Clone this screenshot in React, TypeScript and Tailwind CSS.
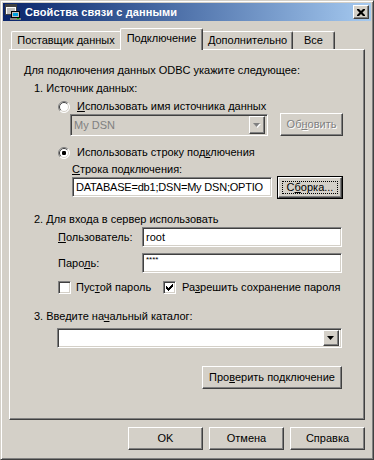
import React from 'react';

const raised = 'border border-t-white border-l-white border-r-[#404040] border-b-[#404040] shadow-[inset_-1px_-1px_#808080] bg-[#d4d0c8]';
const sunken = 'border border-t-[#808080] border-l-[#808080] border-r-white border-b-white shadow-[inset_1px_1px_#404040,inset_-1px_-1px_#d4d0c8]';
const disabledText = 'text-[#808080] [text-shadow:1px_1px_#ffffff]';

const Radio = ({ checked }: { checked?: boolean }) => (
    <svg width="12" height="12" viewBox="0 0 12 12" className="shrink-0">
        <circle cx="6" cy="6" r="5.5" fill="#ffffff" />
        <path d="M2.1 9.9 A5.5 5.5 0 0 1 9.9 2.1" stroke="#808080" fill="none" />
        <path d="M9.9 2.1 A5.5 5.5 0 0 1 2.1 9.9" stroke="#ffffff" fill="none" />
        <path d="M2.8 9.2 A4.5 4.5 0 0 1 9.2 2.8" stroke="#404040" fill="none" />
        <path d="M9.2 2.8 A4.5 4.5 0 0 1 2.8 9.2" stroke="#d4d0c8" fill="none" />
        {checked && <rect x="4" y="4" width="4" height="4" rx="1.2" fill="#000000" />}
    </svg>
);

const Checkbox = ({ checked }: { checked?: boolean }) => (
    <div className={`w-[13px] h-[13px] shrink-0 bg-white ${sunken} flex items-center justify-center`}>
        {checked && (
            <svg width="7" height="7" viewBox="0 0 7 7">
                <path d="M0 2h1v1h1v1h1v-1h1v-1h1v-1h1v-1h1v3h-1v1h-1v1h-1v1h-1v1h-1v-1h-1v-1h-1z" fill="#000000" />
            </svg>
        )}
    </div>
);

const Arrow = ({ disabled }: { disabled?: boolean }) => (
    <svg width="8" height="5" viewBox="0 0 8 5">
        {disabled && <path d="M1 1h7l-3.5 4z" fill="#ffffff" />}
        <path d="M0 0h7l-3.5 4z" fill={disabled ? '#808080' : '#000000'} />
    </svg>
);

const Button = ({ className, children }: { className: string; children: React.ReactNode }) => (
    <div className={`${raised} flex items-center justify-center ${className}`}>{children}</div>
);

const TitleIcon = () => (
    <svg width="16" height="16" viewBox="0 0 16 16">
        <rect x="0.5" y="0.5" width="11" height="10" fill="#ffffff" stroke="#404040" />
        <rect x="1" y="1" width="10" height="2" fill="#404040" />
        <path d="M2 5h8M2 7h8M2 9h5" stroke="#808080" />
        <rect x="6.5" y="7.5" width="8" height="6" fill="#c0c0c0" stroke="#000000" />
        <rect x="8" y="9" width="5" height="3" fill="#00a0e0" />
        <rect x="5" y="14" width="11" height="2" fill="#808080" />
        <rect x="12" y="14" width="2" height="1" fill="#00c000" />
    </svg>
);

export default function App() {
    return (
        <div className="w-[374px] h-[460px] bg-[#d4d0c8] border border-t-[#d4d0c8] border-l-[#d4d0c8] border-r-[#404040] border-b-[#404040] shadow-[inset_1px_1px_#ffffff,inset_-1px_-1px_#808080] p-[2px] font-['Liberation_Sans',sans-serif] text-[11px] leading-[13px] text-black">
            {/* title bar */}
            <div className="h-[18px] flex items-center bg-linear-to-r from-[#0a246a] to-[#a6caf0] pl-[2px] pr-[2px]">
                <TitleIcon />
                <span className="ml-[4px] text-white font-bold text-[11px] tracking-[0.1px]">Свойства связи с данными</span>
                <div className="flex-1" />
                <Button className="w-[16px] h-[14px]">
                    <svg width="8" height="7" viewBox="0 0 8 7">
                        <path d="M0 0h2l2 2 2-2h2v1l-2.5 2.5 2.5 2.5v1h-2l-2-2-2 2h-2v-1l2.5-2.5-2.5-2.5z" fill="#000000" />
                    </svg>
                </Button>
            </div>

            {/* tabs */}
            <div className="mt-[7px] ml-[6px] h-[21px] flex items-end pl-[2px]">
                <div className="w-[109px] h-[18px] border-t border-l border-white rounded-tl-[2px] flex items-center justify-center">
                    Поставщик данных
                </div>
                <div className="relative z-10 -mb-[1px] w-[83px] h-[22px] bg-[#d4d0c8] border-t border-l border-white border-r border-r-[#404040] rounded-t-[2px] shadow-[inset_-1px_0_#808080] flex items-center justify-center pb-[2px]">
                    Подключение
                </div>
                <div className="w-[90px] h-[18px] border-t border-white border-r border-r-[#404040] rounded-tr-[2px] shadow-[inset_-1px_0_#808080] flex items-center justify-center">
                    Дополнительно
                </div>
                <div className="w-[42px] h-[18px] border-t border-white border-r border-r-[#404040] rounded-tr-[2px] shadow-[inset_-1px_0_#808080] flex items-center justify-center">
                    Все
                </div>
            </div>

            {/* tab panel */}
            <div className={`ml-[6px] w-[356px] h-[371px] ${raised} flex flex-col`}>
                <div className="mt-[14px] h-[13px] pl-[14px]">Для подключения данных ODBC укажите следующее:</div>
                <div className="mt-[5px] h-[13px] pl-[24px]">1. Источник данных:</div>

                <div className="mt-[5px] h-[13px] flex items-center pl-[48px] gap-[7px]">
                    <Radio />
                    <span><u>И</u>спользовать имя источника данных</span>
                </div>
                <div className="h-[23px] flex pl-[60px]">
                    <div className={`mt-[1px] w-[198px] h-[22px] ${sunken} flex items-center pl-[3px] pr-[2px]`}>
                        <span className="flex-1 text-[#808080]">My DSN</span>
                        <div className={`w-[16px] h-[18px] ${raised} flex items-center justify-center`}>
                            <Arrow disabled />
                        </div>
                    </div>
                    <Button className={`ml-[12px] w-[63px] h-[23px] ${disabledText}`}>
                        <span>Об<u>н</u>овить</span>
                    </Button>
                </div>

                <div className="mt-[10px] h-[13px] flex items-center pl-[48px] gap-[7px]">
                    <Radio checked />
                    <span>Использовать строку под<u>к</u>лючения</span>
                </div>
                <div className="mt-[4px] h-[13px] pl-[62px]"><u>С</u>трока подключения:</div>
                <div className="h-[23px] flex pl-[62px]">
                    <div className={`mt-[1px] w-[200px] h-[20px] bg-white ${sunken} flex items-center pl-[3px] overflow-hidden whitespace-nowrap tracking-[-0.2px]`}>
                        DATABASE=db1;DSN=My DSN;OPTIO
                    </div>
                    <div className="ml-[5px] w-[66px] h-[23px] border border-black">
                        <div className={`w-full h-full ${raised} p-[3px]`}>
                            <div className="w-full h-full border border-dotted border-black flex items-center justify-center">
                                <span>С<u>б</u>орка...</span>
                            </div>
                        </div>
                    </div>
                </div>

                <div className="mt-[14px] h-[13px] pl-[24px]">2. Для входа в сервер использовать</div>
                <div className="mt-[1px] h-[20px] flex items-center pl-[48px]">
                    <span className="w-[84px]"><u>П</u>ользователь:</span>
                    <div className={`w-[200px] h-[20px] bg-white ${sunken} flex items-center pl-[3px]`}>root</div>
                </div>
                <div className="mt-[6px] h-[20px] flex items-center pl-[48px]">
                    <span className="w-[84px]">Паро<u>л</u>ь:</span>
                    <div className={`w-[200px] h-[20px] bg-white ${sunken} flex items-start pl-[3px] pt-[2px] text-[8px] leading-[8px]`}>****</div>
                </div>
                <div className="mt-[8px] h-[13px] flex items-center pl-[48px]">
                    <div className="w-[105px] flex items-center gap-[5px]">
                        <Checkbox />
                        <span>Пус<u>т</u>ой пароль</span>
                    </div>
                    <div className="flex items-center gap-[6px]">
                        <Checkbox checked />
                        <span>Ра<u>з</u>решить сохранение пароля</span>
                    </div>
                </div>

                <div className="mt-[16px] h-[13px] pl-[24px]">3. Введите на<u>ч</u>альный каталог:</div>
                <div className="mt-[5px] pl-[47px]">
                    <div className={`w-[285px] h-[20px] bg-white ${sunken} flex items-center justify-end pr-[2px]`}>
                        <div className={`w-[16px] h-[16px] ${raised} flex items-center justify-center`}>
                            <Arrow />
                        </div>
                    </div>
                </div>
                <div className="mt-[18px] pl-[192px]">
                    <Button className="w-[140px] h-[23px]">
                        <span>Про<u>в</u>ерить подключение</span>
                    </Button>
                </div>
            </div>

            {/* dialog buttons */}
            <div className="mt-[7px] flex gap-[6px] pl-[125px]">
                <Button className="w-[75px] h-[23px]">OK</Button>
                <Button className="w-[75px] h-[23px]">Отмена</Button>
                <Button className="w-[75px] h-[23px]">Справка</Button>
            </div>
        </div>
    );
}
